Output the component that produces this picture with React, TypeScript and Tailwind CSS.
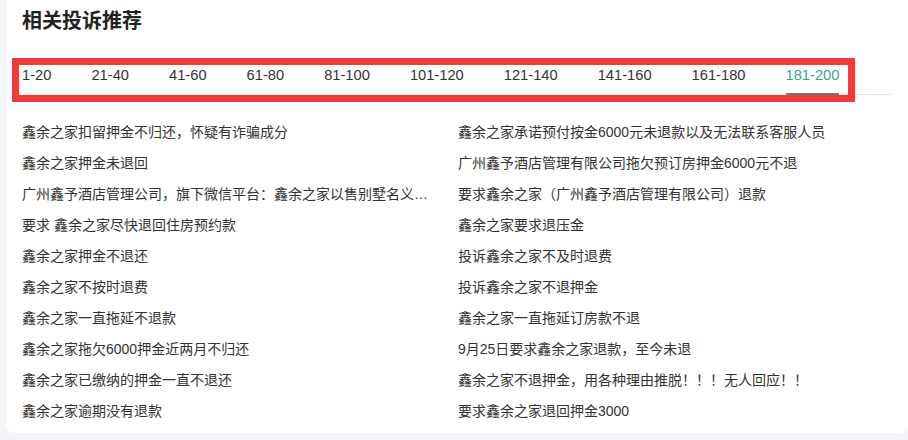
const tabs = ['1-20', '21-40', '41-60', '61-80', '81-100', '101-120', '121-140', '141-160', '161-180', '181-200'];

const rows: [string, string][] = [
  ['鑫余之家扣留押金不归还，怀疑有诈骗成分', '鑫余之家承诺预付按金6000元未退款以及无法联系客服人员'],
  ['鑫余之家押金未退回', '广州鑫予酒店管理有限公司拖欠预订房押金6000元不退'],
  ['广州鑫予酒店管理公司，旗下微信平台：鑫余之家以售别墅名义诈骗定金', '要求鑫余之家（广州鑫予酒店管理有限公司）退款'],
  ['要求 鑫余之家尽快退回住房预约款', '鑫余之家要求退压金'],
  ['鑫余之家押金不退还', '投诉鑫余之家不及时退费'],
  ['鑫余之家不按时退费', '投诉鑫余之家不退押金'],
  ['鑫余之家一直拖延不退款', '鑫余之家一直拖延订房款不退'],
  ['鑫余之家拖欠6000押金近两月不归还', '9月25日要求鑫余之家退款，至今未退'],
  ['鑫余之家已缴纳的押金一直不退还', '鑫余之家不退押金，用各种理由推脱！！！无人回应！！'],
  ['鑫余之家逾期没有退款', '要求鑫余之家退回押金3000'],
];

export default function App() {
  const active = '181-200';

  return (
    <div className="min-h-screen bg-[#f4f5f9] pl-[6px] pb-[7px] font-['Liberation_Sans','Noto_Sans_CJK_SC',sans-serif]">
      <div className="bg-white rounded-b-lg pl-4 pr-[15px] pt-[7px] pb-[6px]">
        <h2 className="text-[20px] leading-[28px] font-bold text-[#222]">相关投诉推荐</h2>

        <div className="relative mt-[29px]">
          <div className="flex gap-[40px] border-b border-[#e6e6e6]">
            {tabs.map((t) => (
              <div
                key={t}
                className={
                  t === active
                    ? 'relative text-[14.7px] leading-[22px] pb-[8px] text-[#3ba58b]'
                    : 'relative text-[14.7px] leading-[22px] pb-[8px] text-[#333]'
                }
              >
                {t}
                {t === active && (
                  <div className="absolute left-0 right-0 -bottom-px h-[2px] bg-[#6b7b6e]"></div>
                )}
              </div>
            ))}
          </div>
          <div className="absolute -left-[10px] -top-[6px] w-[843px] h-[44px] border-[7px] border-[#f33b3b] pointer-events-none"></div>
        </div>

        <div className="mt-[22px] grid grid-cols-[436px_1fr] text-[14px] leading-[31px] text-[#333]">
          {rows.map(([a, b], i) => (
            <div key={i} className="contents">
              <div className="truncate pr-[28px]">{a}</div>
              <div className="truncate">{b}</div>
            </div>
          ))}
        </div>
      </div>
    </div>
  );
}
